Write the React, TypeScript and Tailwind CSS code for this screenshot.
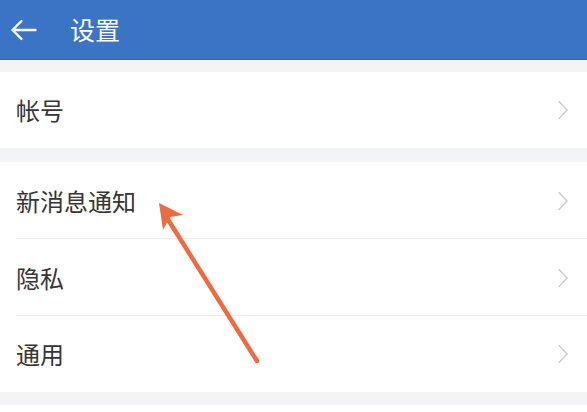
import React from 'react';

const Chevron: React.FC = () => (
  <svg width="12" height="20" viewBox="0 0 12 20" fill="none" className="shrink-0">
    <path d="M2 1.5 L10 10 L2 18.5" stroke="#cccccc" strokeWidth="1.5" strokeLinecap="round" strokeLinejoin="round" />
  </svg>
);

const Row: React.FC<{ label: string; divider?: boolean; h: string }> = ({ label, divider, h }) => (
  <div className={`flex items-center justify-between pl-4 pr-[18px] bg-white ${h} relative`}>
    <span className="text-[24px] text-[#353535] leading-none">{label}</span>
    <Chevron />
    {divider && <div className="absolute left-4 right-0 bottom-0 h-px bg-[#eeeeee]" />}
  </div>
);

export default function App() {
  return (
    <div
      className="relative w-[587px] h-[412px] overflow-hidden bg-[#f3f4f6]"
      style={{ fontFamily: '"Noto Sans CJK SC", "Noto Sans", sans-serif' }}
    >
      <header className="h-[60px] bg-[#3b74c5] border-b border-[#3366ad] flex items-center pl-[10px]">
        <svg width="27" height="22" viewBox="0 0 27 22" fill="none">
          <path d="M25.5 11 H2.5 M11.5 2 L2.5 11 L11.5 20" stroke="white" strokeWidth="2.4" strokeLinecap="round" strokeLinejoin="round" />
        </svg>
        <span className="ml-[33px] text-[25px] text-white leading-none">设置</span>
      </header>

      <div className="h-[12px]" />
      <Row label="帐号" h="h-[76px]" />
      <div className="h-[14px]" />
      <Row label="新消息通知" h="h-[77px]" divider />
      <Row label="隐私" h="h-[77px]" divider />
      <Row label="通用" h="h-[76px]" />
      <div className="h-[13px]" />
      <div className="h-[20px] bg-white" />

      <svg className="absolute left-0 top-0 pointer-events-none" width="587" height="412">
        <line x1="167" y1="218" x2="257" y2="361" stroke="#ef6b3f" strokeWidth="4.5" strokeLinecap="round" />
        <polygon points="159,203 183,215 170,217 163,230" fill="#ef6b3f" />
      </svg>
    </div>
  );
}
